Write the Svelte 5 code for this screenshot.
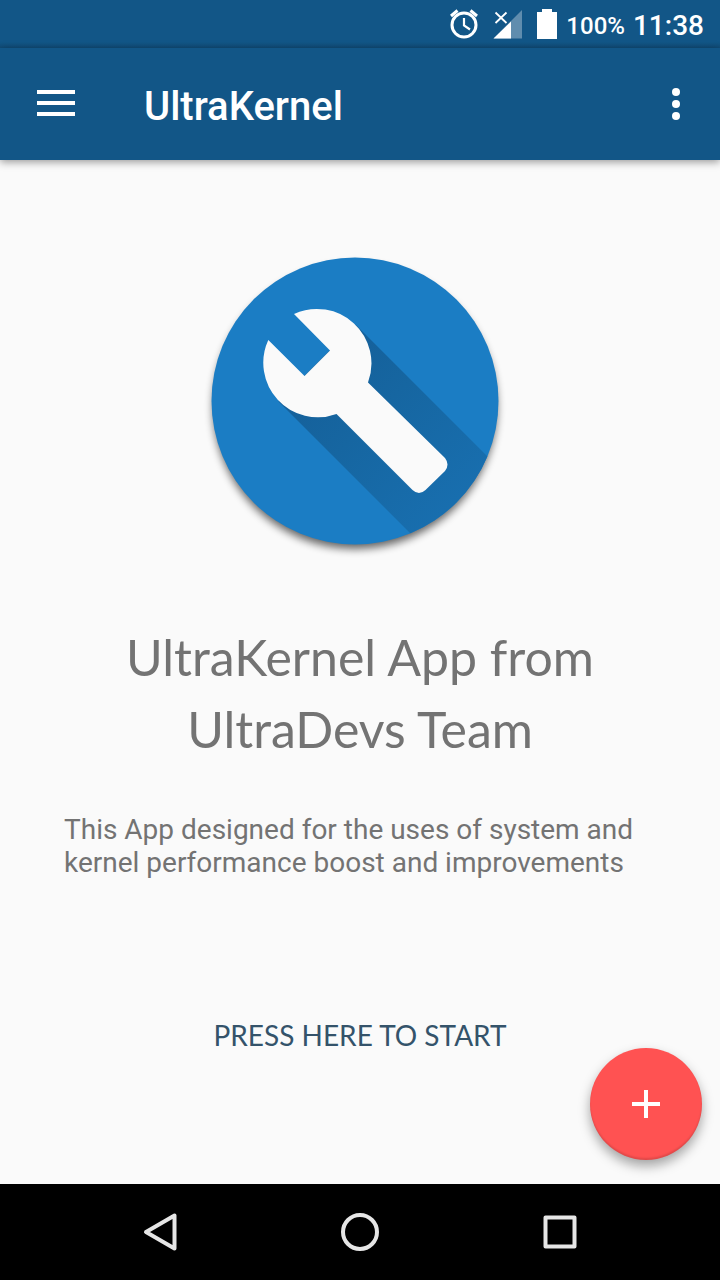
<script lang="ts">
  const title = 'UltraKernel';
</script>

<div class="screen">
  <div class="status">
    <svg width="32" height="32" viewBox="0 0 32 32" aria-label="Alarm set" role="img">
      <g fill="none" stroke="#fff">
        <circle cx="16" cy="17" r="12" stroke-width="3" />
        <path d="M16 10V17.500L22 21.500" stroke-width="2.200" />
        <path d="M3 8L9.500 2.500M29 8L22.500 2.500" stroke-width="3" />
      </g>
    </svg>
    <svg class="signal" width="32" height="32" viewBox="0 0 32 32" aria-label="No data" role="img">
      <path d="M30 2V30.500H1.500Z" fill="#fff" opacity=".33" />
      <path d="M19 13.500V30.500H1.500Z" fill="#fff" />
      <path d="M3.500 4.500L14.500 15M14.500 4.500L3.500 15" stroke="#fff" stroke-width="1.800" />
    </svg>
    <svg class="battery" width="22" height="32" viewBox="0 0 22 32" aria-label="Battery full" role="img">
      <path d="M1 4H6V1H16V4H21V31H1Z" fill="#fff" />
    </svg>
    <span class="percent">100%</span>
    <span class="clock">11:38</span>
  </div>

  <header>
    <button class="icon" aria-label="Open menu">
      <svg width="40" height="40" viewBox="0 0 40 40">
        <path d="M1 8H39M1 19H39M1 30H39" stroke="#fff" stroke-width="4" />
      </svg>
    </button>
    <h1>{title}</h1>
    <button class="icon more" aria-label="More options">
      <svg width="40" height="40" viewBox="0 0 40 40" fill="#fff">
        <circle cx="20" cy="8" r="4" /><circle cx="20" cy="20" r="4" /><circle cx="20" cy="32" r="4" />
      </svg>
    </button>
  </header>

  <main>
    <svg class="logo" width="320" height="320" viewBox="0 0 320 320" aria-label="UltraKernel logo" role="img">
      <defs>
        <linearGradient id="fade" gradientUnits="userSpaceOnUse" x1="117" y1="118" x2="255" y2="256">
          <stop offset="0" stop-color="#15609a" />
          <stop offset=".4" stop-color="#1666a1" />
          <stop offset="1" stop-color="#186eae" />
        </linearGradient>
        <clipPath id="disc"><circle cx="155" cy="156" r="143.500" /></clipPath>
        <filter id="soft" x="-10%" y="-10%" width="120%" height="120%">
          <feGaussianBlur stdDeviation="4" />
        </filter>
      </defs>
      <circle cx="155" cy="162" r="142" fill="#000" opacity=".6" filter="url(#soft)" />
      <circle cx="155" cy="156" r="143.500" fill="#1b7dc4" />
      <path d="M155.500 79.500L310 234L233 311L78.500 156.500Z" fill="url(#fade)" clip-path="url(#disc)" />
      <path
        fill="#fafafa"
        d="M94 69L130 105.500L104.500 131L68.300 95A54.500 54.500 0 0 0 136.500 169L212.500 245Q219 251 225.500 245L245 226Q250 219.500 245 213L168 137.500A54.500 54.500 0 0 0 94 69Z"
      />
    </svg>
    <h2>UltraKernel App from UltraDevs Team</h2>
    <p>This App designed for the uses of system and kernel performance boost and improvements</p>
    <button class="start">PRESS HERE TO START</button>
    <button class="fab" aria-label="Add">
      <svg width="28" height="28" viewBox="0 0 28 28">
        <path d="M14 0V28M0 14H28" stroke="#fff" stroke-width="4" />
      </svg>
    </button>
  </main>

  <nav aria-label="System">
    <button aria-label="Back">
      <svg width="40" height="40" viewBox="0 0 40 40"><path d="M34.500 3.500V36.500L6 20Z" /></svg>
    </button>
    <button aria-label="Home">
      <svg width="40" height="40" viewBox="0 0 40 40"><circle cx="20" cy="20" r="17" /></svg>
    </button>
    <button aria-label="Recent apps">
      <svg width="40" height="40" viewBox="0 0 40 40"><rect x="5.500" y="5.500" width="29" height="29" /></svg>
    </button>
  </nav>
</div>

<style>
  :global(body) {
    margin: 0;
    background: #fafafa;
  }
  .screen {
    min-height: 100vh;
    display: flex;
    flex-direction: column;
    font-family: Roboto, sans-serif;
  }
  button {
    padding: 0;
    border: 0;
    background: none;
    font: inherit;
    cursor: pointer;
  }
  svg {
    display: block;
  }
  .status {
    height: 48px;
    display: flex;
    align-items: center;
    justify-content: flex-end;
    padding: 0 16px;
    box-sizing: border-box;
    background: linear-gradient(#125687 42px, #104c78);
    color: #fff;
    font-weight: 500;
  }
  .signal {
    margin-left: 12px;
  }
  .battery {
    margin-left: 12px;
  }
  .percent {
    margin-left: 8px;
    font-size: 24px;
    line-height: 48px;
    padding-top: 4px;
  }
  .clock {
    margin-left: 8px;
    font-size: 28px;
    line-height: 48px;
    padding-top: 4px;
  }
  header {
    position: relative;
    height: 112px;
    display: flex;
    align-items: center;
    padding: 0 24px 0 36px;
    box-sizing: border-box;
    background: #125687;
    color: #fff;
    box-shadow: 0 2px 8px rgba(0, 0, 0, 0.4);
  }
  h1 {
    flex: 1;
    margin: 0 0 0 68px;
    padding-top: 6px;
    font-size: 40px;
    line-height: 48px;
    font-weight: 500;
  }
  main {
    position: relative;
    flex: 1;
    display: flex;
    flex-direction: column;
    align-items: center;
    padding: 85px 64px 0;
  }
  h2 {
    margin: 56px 0 0;
    font-family: "Coming Soon", Lato, sans-serif;
    font-size: 50px;
    line-height: 72px;
    font-weight: 400;
    text-align: center;
    color: #737373;
  }
  p {
    align-self: stretch;
    margin: 48px 0 0;
    font-size: 28px;
    line-height: 33px;
    color: #737373;
  }
  .start {
    margin-top: 132px;
    font-family: "Coming Soon", Lato, sans-serif;
    font-size: 28px;
    line-height: 48px;
    color: #34536a;
  }
  .fab {
    position: absolute;
    right: 18px;
    bottom: 24px;
    width: 112px;
    height: 112px;
    display: grid;
    place-items: center;
    border-radius: 50%;
    background: #ff5252;
    box-shadow: 0 6px 12px rgba(0, 0, 0, 0.35), inset 0 -2px 2px rgba(0, 0, 0, 0.12);
  }
  nav {
    height: 96px;
    display: flex;
    align-items: center;
    justify-content: center;
    gap: 160px;
    background: #000;
  }
  nav svg {
    fill: none;
    stroke: #e6e6e6;
    stroke-width: 4;
    stroke-linejoin: round;
  }
</style>
